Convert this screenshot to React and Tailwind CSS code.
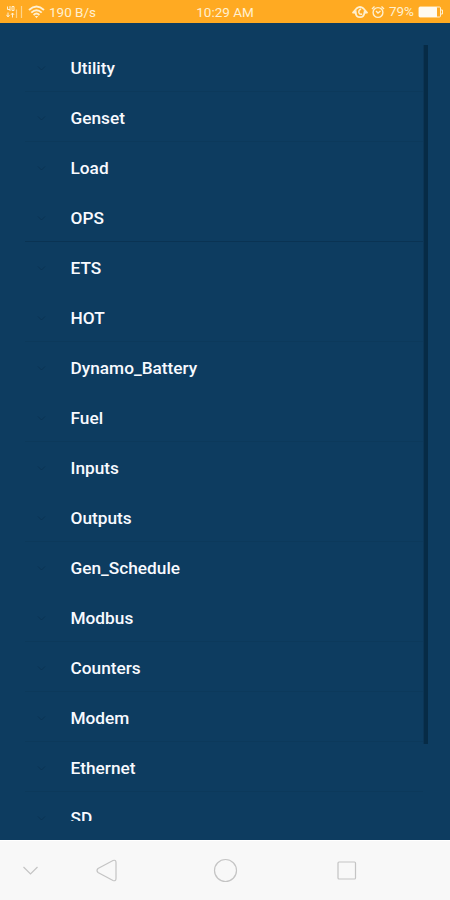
import React from 'react';

const ITEMS = [
  { label: 'Utility', line: 'faint' },
  { label: 'Genset', line: 'faint' },
  { label: 'Load', line: 'none' },
  { label: 'OPS', line: 'strong' },
  { label: 'ETS', line: 'none' },
  { label: 'HOT', line: 'faint' },
  { label: 'Dynamo_Battery', line: 'none' },
  { label: 'Fuel', line: 'faint' },
  { label: 'Inputs', line: 'none' },
  { label: 'Outputs', line: 'faint' },
  { label: 'Gen_Schedule', line: 'none' },
  { label: 'Modbus', line: 'faint' },
  { label: 'Counters', line: 'faint' },
  { label: 'Modem', line: 'faint' },
  { label: 'Ethernet', line: 'faint' },
  { label: 'SD', line: 'none' },
];

const LINE_COLORS = {
  none: 'border-transparent',
  faint: 'border-[#0c395b]',
  strong: 'border-[#0a3353]',
};

const SignalIcon = () => (
  <svg width="18" height="14" viewBox="0 0 18 14" fill="none" stroke="currentColor">
    <path d="M1.500 1.500v3h2.500M4 1v5M6 1.500h2v4H6z" strokeWidth="1" />
    <path d="M2 7.500v4M0.500 9.800L2 12L3.500 10M6.500 12.500v-4.500M5 9.800L6.500 8L8 9.800" strokeWidth="1" />
    <path d="M10.500 4.500v8.500M15.500 1v12" strokeWidth="1.200" opacity="0.600" />
  </svg>
);

const WifiIcon = () => (
  <svg width="17" height="14" viewBox="0 0 17 14" fill="none" stroke="currentColor" strokeWidth="1.900">
    <path d="M1 5Q8.500 -1.800 16 5" />
    <path d="M3.300 7.600Q8.500 2.700 13.700 7.600" />
    <path d="M5.600 10Q8.500 7.200 11.400 10" />
    <path d="M6.800 11h3.400L8.500 13.300z" fill="currentColor" stroke="none" />
  </svg>
);

const EyeIcon = () => (
  <svg width="16" height="14" viewBox="0 0 16 14" fill="none" stroke="currentColor">
    <path d="M1 7.500L4.500 3.500Q8 0.500 11.500 3.500L15 7.500H12.500Q12 12.200 8 12.200T3.500 7.500z" strokeWidth="1.800" strokeLinejoin="round" />
    <path d="M9 4Q6.500 5 6.800 7.500Q7.500 9.800 10.200 9" strokeWidth="1.400" />
    <path d="M1.500 7.500L4.500 5v4.500zM14.500 7.500L11.800 5v4.500z" fill="currentColor" stroke="none" />
  </svg>
);

const AlarmIcon = () => (
  <svg width="14" height="14" viewBox="0 0 14 14" fill="none" stroke="currentColor" strokeWidth="1.400">
    <circle cx="7" cy="7.500" r="4.900" />
    <path d="M1 4L3.500 1.500M13 4L10.500 1.500M5 6L7 8L9.500 6" />
  </svg>
);

const BatteryIcon = () => (
  <svg width="26" height="12" viewBox="0 0 26 12" fill="none" stroke="currentColor">
    <rect x="1" y="1" width="21.500" height="10" rx="1" strokeWidth="1" />
    <rect x="1" y="1" width="18" height="10" rx="0.500" fill="#fffaf0" stroke="none" />
    <path d="M23 4h1.500v4H23" strokeWidth="1" />
  </svg>
);

/**
 * Status bar with network speed, clock and battery
 */
const StatusBar = () => (
  <header className="grid h-[23px] shrink-0 grid-cols-3 items-center bg-[#ffaa22] px-[6px] text-[13.5px] leading-none text-[#fff0d0]">
    <div className="flex items-center">
      <SignalIcon />
      <span className="ml-[4px]"><WifiIcon /></span>
      <span className="ml-[4px] mt-[2px] whitespace-nowrap">190 B/s</span>
    </div>
    <span className="mt-[3px] text-center">10:29 AM</span>
    <div className="flex items-center justify-end">
      <EyeIcon />
      <span className="ml-[3px]"><AlarmIcon /></span>
      <span className="ml-[4px]">79%</span>
      <span className="ml-[4px]"><BatteryIcon /></span>
    </div>
  </header>
);

/**
 * Expandable group row
 * @param {string} label - Group name
 * @param {string} line - Separator strength
 */
const GroupRow = ({ label, line }) => (
  <li className={`flex h-[50px] shrink-0 items-center border-b pt-[2px] pl-[12px] ${LINE_COLORS[line]}`}>
    <svg width="9" height="5" viewBox="0 0 9 5" fill="none" stroke="#0a3253" className="mt-[2px]">
      <path d="M1 0.500l3.500 3.500L8 0.500" />
    </svg>
    <span className="ml-[24.500px] text-[17.25px] leading-[20px] font-medium text-[#f8faff]">{label}</span>
  </li>
);

const NavBar = () => (
  <nav className="h-[60px] shrink-0 border-t border-white bg-[#f8f8f8]">
    <svg width="450" height="59" viewBox="0 841 450 59" fill="none" stroke="#c4c4c4" strokeWidth="1.200">
      <path d="M23.500 867l7 7 7-7" />
      <path d="M98 868.500L113 860.500Q116 859.500 116 862.500V878.500Q116 881.500 113 880.500L98 872.500Q96 870.500 98 868.500z" />
      <circle cx="225.500" cy="870.500" r="11" />
      <rect x="338" y="862" width="17.500" height="17" rx="1" />
    </svg>
  </nav>
);

export default function App() {
  return (
    <div className="flex h-[900px] w-[450px] flex-col overflow-hidden bg-[#0d3c60] font-['Roboto',sans-serif]">
      <StatusBar />
      <main className="min-h-0 flex-1 pt-[19px] pb-[19px] pl-[25px]">
        <div className="flex h-full overflow-hidden">
          <ul className="flex w-[398px] flex-col">
            {ITEMS.map((item) => (
              <GroupRow key={item.label} {...item} />
            ))}
          </ul>
          {/* Scroll thumb */}
          <div className="mt-[3px] h-[699px] w-[5px] border-l border-[#0b3556] bg-[#062b46]" />
        </div>
      </main>
      <NavBar />
    </div>
  );
}
